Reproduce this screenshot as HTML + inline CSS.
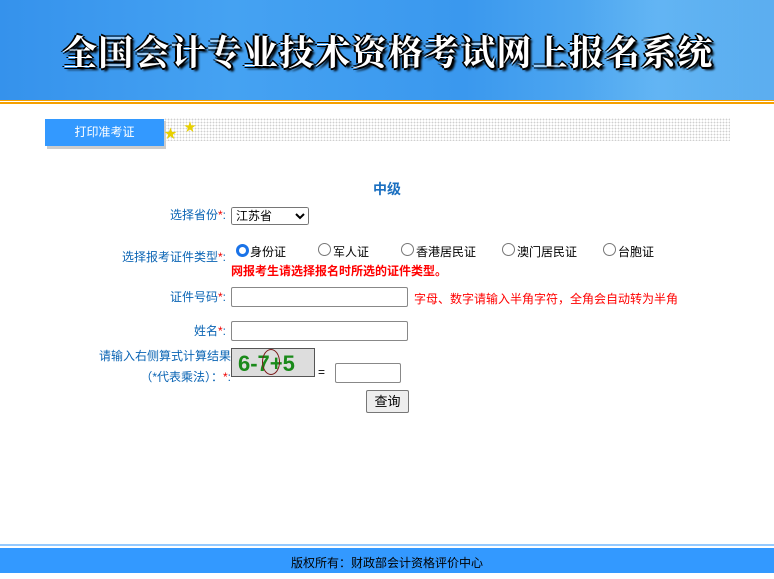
<!DOCTYPE html>
<html><head><meta charset="utf-8"><style>
body{margin:0;width:774px;height:573px;position:relative;overflow:hidden;background:#fff;font-family:"Liberation Sans","Noto Sans CJK SC",sans-serif;font-size:12px}
.a{position:absolute;white-space:nowrap}
.hdr{left:0;top:0;width:774px;height:100px;background:linear-gradient(90deg,#3592ec 0%,#45a2f2 30%,#3a98ee 60%,#5ab0f2 85%,#3d9be8 100%)}
.title{left:62px;top:26px;font-size:35px;letter-spacing:1.2px;font-family:"Noto Serif CJK SC",serif;font-weight:bold;color:#fff;text-shadow:-2px 0 #000,2px 0 #000,0 -2px #000,0 2px #000,3px 3px 2px #000}
.lbl{color:#0a64b4;font-size:12px;text-align:right}
.st{color:#e00}
input.t{position:absolute;height:18px;border:1px solid #888;border-radius:2px;padding:0;margin:0}
.rad{position:absolute;width:11px;height:11px;border:1px solid #777;border-radius:50%;background:#fff}
</style></head><body>
<div class="a hdr"></div>
<div class="a" style="left:580px;top:0;width:194px;height:100px;background:linear-gradient(90deg,rgba(255,255,255,0),rgba(150,210,255,.35))"></div>
<div class="a title">全国会计专业技术资格考试网上报名系统</div>
<div class="a" style="left:0;top:100px;width:774px;height:4px;background:#f5a000"></div>
<div class="a" style="left:0;top:101px;width:774px;height:1px;background:#fff"></div>

<div class="a" style="left:47px;top:121px;width:119px;height:28px;background:#ccc"></div>
<div class="a" style="left:45px;top:119px;width:119px;height:27px;background:#3399ff;color:#fff;font-size:12px;line-height:27px;text-align:center">打印准考证</div>
<div class="a" style="left:164px;top:118px;width:566px;height:23px;background-image:radial-gradient(circle,#cfcfcf 0.7px,transparent 1px);background-size:3px 3px"></div>
<div class="a" style="left:164px;top:123px;color:#e8d000;font-size:13px">★</div>
<div class="a" style="left:184px;top:118px;color:#e8d000;font-size:12px">★</div>

<div class="a" style="left:373px;top:179px;color:#1a6fc0;font-weight:bold;font-size:14px">中级</div>

<div class="a lbl" style="right:548px;top:206px">选择省份<span class="st">*</span>:</div>
<select class="a" style="left:231px;top:207px;width:78px;height:18px;font-size:12px;padding:0">
<option>江苏省</option></select>

<div class="a lbl" style="right:548px;top:248px">选择报考证件类型<span class="st">*</span>:</div>
<div class="rad" style="left:236px;top:244px;border:3px solid #1a73e8;width:7px;height:7px"></div>
<div class="a" style="left:250px;top:243px;color:#000">身份证</div>
<div class="rad" style="left:318px;top:243px"></div>
<div class="a" style="left:333px;top:243px;color:#000">军人证</div>
<div class="rad" style="left:401px;top:243px"></div>
<div class="a" style="left:416px;top:243px;color:#000">香港居民证</div>
<div class="rad" style="left:502px;top:243px"></div>
<div class="a" style="left:517px;top:243px;color:#000">澳门居民证</div>
<div class="rad" style="left:603px;top:243px"></div>
<div class="a" style="left:618px;top:243px;color:#000">台胞证</div>
<div class="a" style="left:231px;top:262px;color:#f00;font-weight:bold;font-size:12px">网报考生请选择报名时所选的证件类型。</div>

<div class="a lbl" style="right:548px;top:288px">证件号码<span class="st">*</span>:</div>
<input class="t" style="left:231px;top:287px;width:175px">
<div class="a" style="left:414px;top:290px;color:#f00">字母、数字请输入半角字符，全角会自动转为半角</div>

<div class="a lbl" style="right:548px;top:322px">姓名<span class="st">*</span>:</div>
<input class="t" style="left:231px;top:321px;width:175px">

<div class="a lbl" style="right:543px;top:346px;line-height:21px">请输入右侧算式计算结果<br>（*代表乘法）：<span class="st">*</span>:</div>
<div class="a" style="left:231px;top:348px;width:84px;height:29px;background:#ddd;border:1px solid #555;color:#1a8a1a;font-weight:bold;font-size:22px;line-height:29px;padding-left:6px;box-sizing:border-box">6-7+5</div>
<div class="a" style="left:262px;top:349px;width:16px;height:24px;border:1px solid #7a1a1a;border-radius:50%"></div>
<div class="a" style="left:318px;top:365px;color:#000">=</div>
<input class="t" style="left:335px;top:363px;width:64px">
<div class="a" style="left:366px;top:390px;width:41px;height:21px;border:1px solid #777;border-radius:2px;background:#eee;text-align:center;line-height:21px;font-size:13px">查询</div>

<div class="a" style="left:0;top:544px;width:774px;height:2px;background-image:radial-gradient(circle,#3399ff 0.7px,transparent 0.9px);background-size:2px 2px"></div>
<div class="a" style="left:0;top:548px;width:774px;height:25px;background:#3399ff;text-align:center;line-height:31px;color:#000">版权所有：财政部会计资格评价中心</div>
</body></html>
